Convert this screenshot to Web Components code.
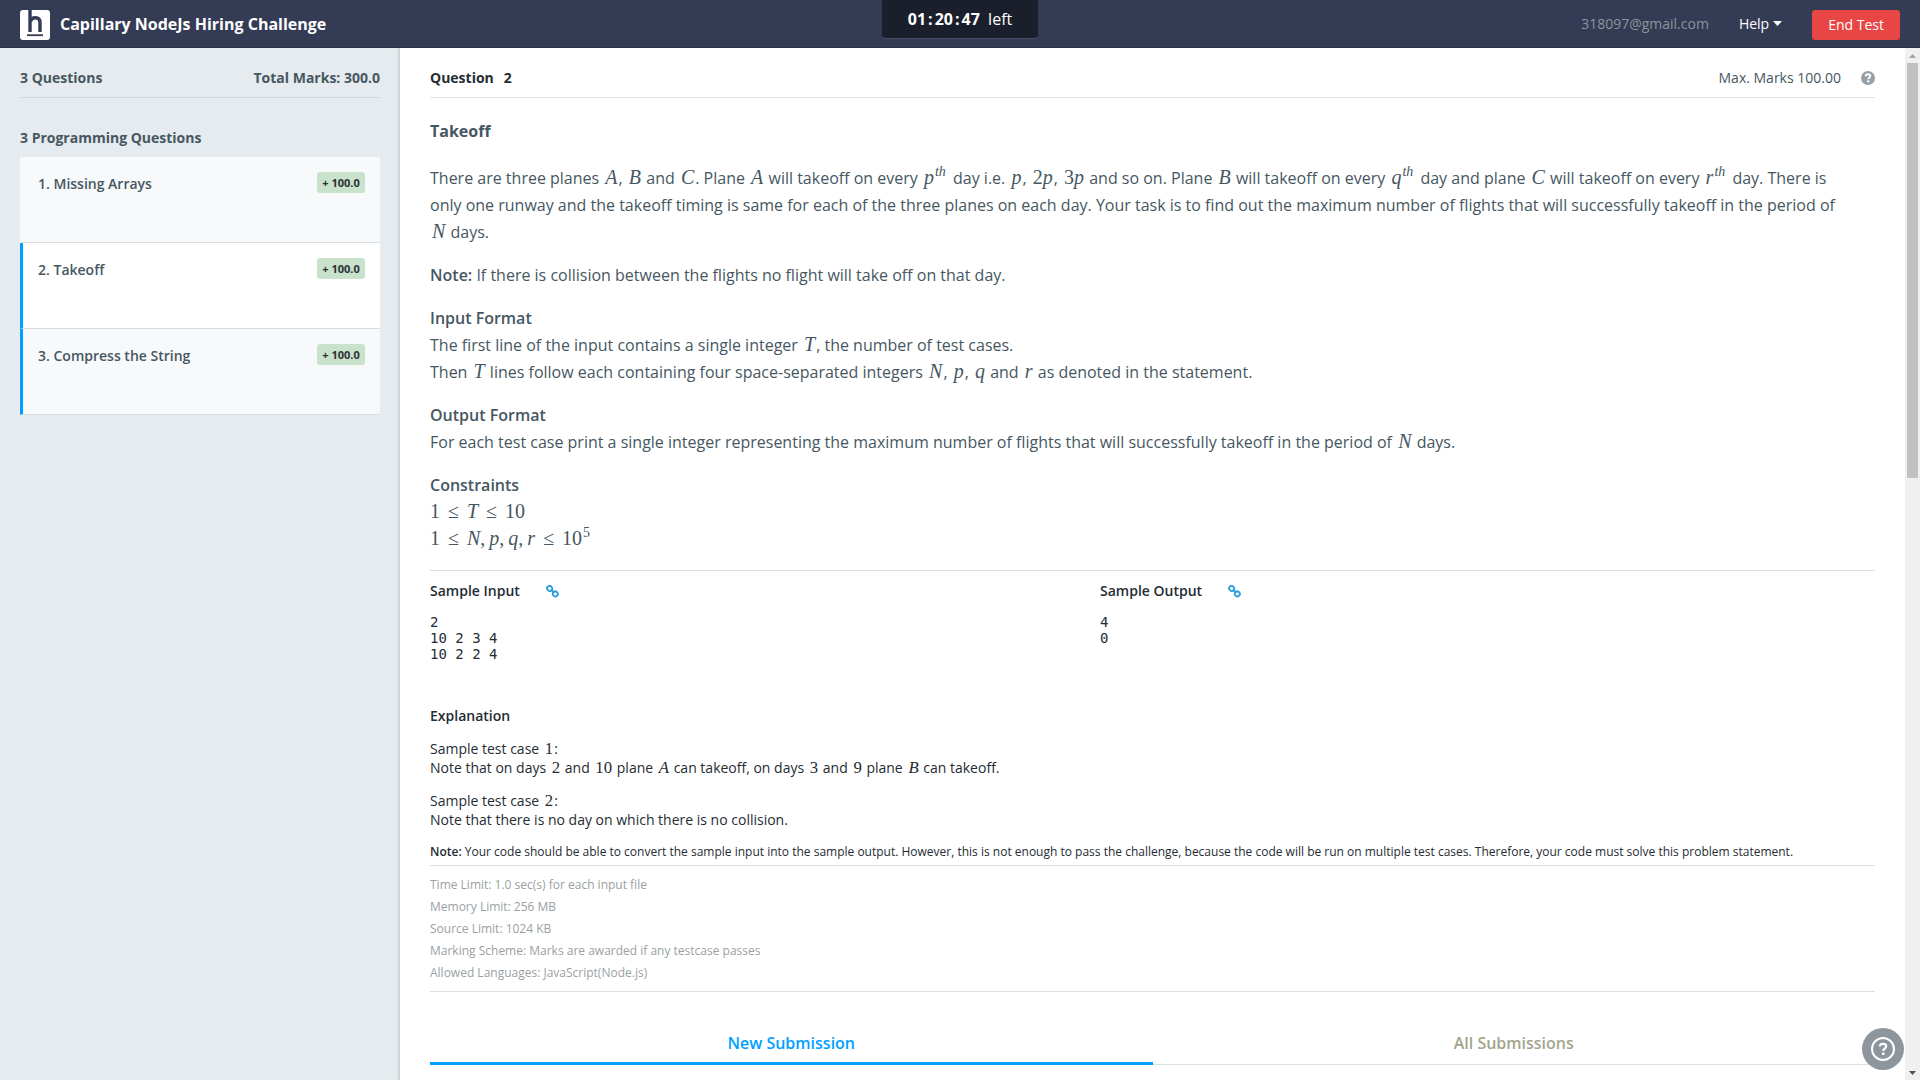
<!DOCTYPE html>
<html lang="en">
<head>
<meta charset="utf-8">
<title>Capillary NodeJs Hiring Challenge</title>
<style>
html,body{height:100%;margin:0}
body{font-family:"Open Sans","Noto Sans",sans-serif;font-size:14px;line-height:20px;color:#465762;background:#fff;overflow:hidden}
</style>
</head>
<body>
<test-app></test-app>
<script>
const define = (name, css, html) => {
  const t = document.createElement('template');
  t.innerHTML = `<style>*{box-sizing:border-box}${css}</style>${html}`;
  customElements.define(name, class extends HTMLElement {
    constructor() {
      super();
      this.attachShadow({mode: 'open'}).append(t.content.cloneNode(true));
    }
  });
};

define('brand-logo', `:host{display:block;width:30px;height:30px}svg{display:block}`,
`<svg width="30" height="30" viewBox="0 0 30 30" aria-hidden="true"><rect width="30" height="30" rx="3" fill="#fff"/><path d="M10 0V22M10.500 11.500C11 8.800 13 7.700 15.600 7.700C18.800 7.700 20 9.500 20 12.500V22" fill="none" stroke="#343b54" stroke-width="3.400"/><path d="M7 25.200H23" stroke="#343b54" stroke-width="1.800"/></svg>`);

define('count-down', `:host{display:block;background:#1b1f2b;color:#fff;border-radius:0 0 4px 4px;border-bottom:1px solid #474d62;width:156px;height:39px;line-height:38px;text-align:center;font-size:16px}
b{font-weight:700}.s{padding:0 2px}`,
`<b>01<span class="s">:</span>20<span class="s">:</span>47</b>&nbsp; left`);

define('top-bar', `:host{display:grid;grid-template-columns:1fr auto 1fr;height:48px;padding:0 20px;background:#343b54;border-bottom:1px solid #2b3049;color:#fff}
.l,.r{display:flex;align-items:center}.l{gap:10px}
.l brand-logo{margin-top:3px}
h1{margin:0;font-size:16px;line-height:24px;font-weight:700}
.r{justify-content:flex-end;gap:30px}
.mail{color:#8c949c}
button{font:inherit;border:0;background:none;color:#fff;padding:0;cursor:pointer}
.help{display:flex;align-items:center;gap:4px}
.end{background:#e84545;border-radius:3px;height:30px;padding:0 16px;margin-top:2px}`,
`<div class="l"><brand-logo></brand-logo><h1>Capillary NodeJs Hiring Challenge</h1></div>
<count-down></count-down>
<div class="r"><span class="mail">318097@gmail.com</span><button class="help">Help <svg width="9" height="5" viewBox="0 0 9 5" aria-hidden="true"><path d="M0 0H9L4.500 5Z" fill="#fff"/></svg></button><button class="end">End Test</button></div>`);

define('question-item', `:host{display:block;height:86px;border-bottom:1px solid #d9dee1;background:#f8f9fb;border-left:3px solid transparent;background-clip:padding-box}
:host([first]){border-left-color:#f8f9fb}
:host([active]){background:#fff}:host([mark]){border-left-color:#00a0ff}
a{display:flex;justify-content:space-between;align-items:flex-start;height:100%;padding:15px 15px 0;color:#465762;text-decoration:none;font-weight:600}
.t{line-height:24px}
.m{background:#c8e2cb;color:#2b3137;border-radius:3px;padding:0 5px;min-width:48px;text-align:center;font-size:11px;line-height:21px;font-weight:700}`,
`<a href="#"><span class="t"><slot></slot></span><span class="m">+ 100.0</span></a>`);

define('side-bar', `:host{display:block;width:400px;flex:none;background:#e5ebee;padding:0 19px 0 20px;border-right:1px solid #cdd4d8;box-shadow:inset -2px 0 2px -1px #cdd4d8}
.sum{display:flex;justify-content:space-between;font-weight:700;line-height:24px;padding:18px 0 7px;border-bottom:1px solid #d3d8db}
h2{font-size:14px;line-height:24px;font-weight:700;margin:28px 0 7px}`,
`<div class="sum"><span>3 Questions</span><span>Total Marks: 300.0</span></div>
<h2>3 Programming Questions</h2>
<nav><question-item first>1. Missing Arrays</question-item><question-item active mark>2. Takeoff</question-item><question-item mark>3. Compress the String</question-item></nav>`);

define('math-text', `:host{display:inline;font-family:"Liberation Serif",serif;font-style:italic;font-size:1.2em;line-height:0;margin:0 1px 0 2px}
::slotted(sup){font-size:70%;line-height:0}::slotted(span){font-style:normal}`,
`<slot></slot>`);

define('problem-statement', `:host{display:block;font-size:16px;line-height:27px;padding:20px 0 17px;border-bottom:1px solid #dedede}
p{margin:0 0 16px}h2{font-size:16px;line-height:27px;margin:0 0 20px;font-weight:700}b{font-weight:600}p:last-child{margin:0}
math-text{font-size:20px}p:last-child math-text{margin:0}
sup{font-size:14px;line-height:0;margin:0 2px 0 1px}span{font-style:normal}.rel{margin:0 8px}.sep{margin-right:4px}`,
`<h2>Takeoff</h2>
<p>There are three planes <math-text>A</math-text>, <math-text>B</math-text> and <math-text>C</math-text>. Plane <math-text>A</math-text> will takeoff on every <math-text>p<sup>th</sup></math-text> day i.e. <math-text>p</math-text>, <math-text><span>2</span>p</math-text>, <math-text><span>3</span>p</math-text> and so on. Plane <math-text>B</math-text> will takeoff on every <math-text>q<sup>th</sup></math-text> day and plane <math-text>C</math-text> will takeoff on every <math-text>r<sup>th</sup></math-text> day. There is<br>only one runway and the takeoff timing is same for each of the three planes on each day. Your task is to find out the maximum number of flights that will successfully takeoff in the period of<br><math-text>N</math-text> days.</p>
<p><b>Note:</b> If there is collision between the flights no flight will take off on that day.</p>
<p><b>Input Format</b><br>The first line of the input contains a single integer <math-text>T</math-text>, the number of test cases.<br>Then <math-text>T</math-text> lines follow each containing four space-separated integers <math-text>N</math-text>, <math-text>p</math-text>, <math-text>q</math-text> and <math-text>r</math-text> as denoted in the statement.</p>
<p><b>Output Format</b><br>For each test case print a single integer representing the maximum number of flights that will successfully takeoff in the period of <math-text>N</math-text> days.</p>
<p><b>Constraints</b><br><math-text><span>1</span><span class="rel">≤</span>T<span class="rel">≤</span><span>10</span></math-text><br><math-text><span>1</span><span class="rel">≤</span>N<span class="sep">,</span>p<span class="sep">,</span>q<span class="sep">,</span>r<span class="rel">≤</span><span>10<sup>5</sup></span></math-text></p>`);

define('link-icon', `:host{display:block}a{display:block}svg{display:block}`,
`<a href="#" aria-label="Copy link"><svg width="13" height="13" viewBox="0 0 13 13" fill="none" stroke="#2b9edb" stroke-width="1.800"><rect x="-2.600" y="-2.400" width="5.200" height="4.800" rx="2.300" transform="translate(3.700 3.500) rotate(45)"/><rect x="-2.600" y="-2.400" width="5.200" height="4.800" rx="2.300" transform="translate(9.300 8.900) rotate(45)"/><path d="M4.800 4.600L8.200 7.800"/></svg></a>`);

define('sample-block', `:host{display:block;color:#252c33}
.h{display:flex;align-items:center;gap:26px}h3{margin:0;font-size:14px;line-height:24px;font-weight:600}
pre{margin:11px 0 0;font:14px/16px "DejaVu Sans Mono","Liberation Mono",monospace}`,
`<div class="h"><h3><slot name="title"></slot></h3><link-icon></link-icon></div><pre><slot></slot></pre>`);

define('sample-explanation', `:host{display:block;color:#252c33}
.cols{display:grid;grid-template-columns:670px 1fr;padding:8px 0 42px}
h3{margin:0 0 11px;font-size:14px;line-height:24px;font-weight:600}
p{margin:0 0 14px;line-height:19px}.n{font-size:12px;line-height:18px;margin:0;padding-bottom:4px;border-bottom:1px solid #dedede}b{font-weight:600}span{font-style:normal}`,
`<div class="cols"><sample-block><span slot="title">Sample Input</span>2
10 2 3 4
10 2 2 4</sample-block><sample-block><span slot="title">Sample Output</span>4
0</sample-block></div>
<h3>Explanation</h3>
<p>Sample test case <math-text><span>1</span></math-text>:<br>Note that on days <math-text><span>2</span></math-text> and <math-text><span>10</span></math-text> plane <math-text>A</math-text> can takeoff, on days <math-text><span>3</span></math-text> and <math-text><span>9</span></math-text> plane <math-text>B</math-text> can takeoff.</p>
<p>Sample test case <math-text><span>2</span></math-text>:<br>Note that there is no day on which there is no collision.</p>
<p class="n"><b>Note:</b> Your code should be able to convert the sample input into the sample output. However, this is not enough to pass the challenge, because the code will be run on multiple test cases. Therefore, your code must solve this problem statement.</p>`);

define('limit-list', `:host{display:block;font-size:12px;line-height:22px;color:#9a9fa3;padding:8px 0 7px;border-bottom:1px solid #dedede}`,
`<div>Time Limit: 1.0 sec(s) for each input file</div><div>Memory Limit: 256 MB</div><div>Source Limit: 1024 KB</div><div>Marking Scheme: Marks are awarded if any testcase passes</div><div>Allowed Languages: JavaScript(Node.js)</div>`);

define('submission-tabs', `:host{display:flex;margin-top:30px;box-shadow:inset 0 -1px #dce1e1}
button{flex:1;font:inherit;font-size:16px;font-weight:600;line-height:24px;height:43px;padding:2px 0 0;border:0;border-bottom:3px solid transparent;background:none;color:#9fa68d}
.on{color:#00a0ff;border-bottom-color:#00a0ff}`,
`<button class="on">New Submission</button><button>All Submissions</button>`);

define('question-head', `:host{display:flex;justify-content:space-between;line-height:24px;padding:18px 0 7px;border-bottom:1px solid #e2e2e2}
b{display:flex;gap:10px;color:#252c33}.r{display:flex;align-items:center;gap:20px}button{border:0;background:none;padding:0;display:block}svg{display:block}`,
`<b><span>Question</span><span>2</span></b><div class="r"><span>Max. Marks 100.00</span><button aria-label="Help"><svg width="14" height="14" viewBox="0 0 14 14"><circle cx="7" cy="7" r="7" fill="#96a0a6"/><path d="M4.700 5.300C4.900 3.800 5.900 3.300 7 3.300C8.400 3.300 9.300 4 9.300 5.100C9.300 6.700 7.200 6.700 7.200 8.300" fill="none" stroke="#fff" stroke-width="1.900"/><rect x="6.200" y="9.300" width="2" height="2" fill="#fff"/></svg></button></div>`);

define('scroll-track', `:host{display:flex;flex-direction:column;align-items:center;justify-content:space-between;flex:none;width:15px;background:#f0f0f0;padding:6px 0 5px}
i{width:11px;height:415px;background:#c1c1c1;margin:5px 0 auto}svg{display:block}`,
`<svg width="7" height="4"><path d="M0 4L3.500 0L7 4Z" fill="#a3a3a3"/></svg><i></i><svg width="7" height="4"><path d="M0 0H7L3.500 4Z" fill="#505050"/></svg>`);

define('help-fab', `:host{position:fixed;right:16px;bottom:10px}button{display:block;border:0;padding:0;background:none}svg{display:block}`,
`<button aria-label="Help"><svg width="42" height="42" viewBox="0 0 42 42"><circle cx="21" cy="21" r="21" fill="#8d959d"/><circle cx="21" cy="21" r="11" fill="none" stroke="#fff" stroke-width="2"/><path d="M17.800 18.300C18 16.600 19.300 15.900 21 15.900C22.900 15.900 24.200 16.800 24.200 18.300C24.200 20.500 21.200 20.600 21.200 23" fill="none" stroke="#fff" stroke-width="2.200"/><rect x="20" y="24.500" width="2.500" height="2.500" rx=".5" fill="#fff"/></svg></button>`);

define('test-app', `:host{display:flex;flex-direction:column;height:100vh}
.row{display:flex;flex:1;min-height:0}main{flex:1;min-width:0;padding:0 30px;overflow:hidden}`,
`<top-bar></top-bar><div class="row"><side-bar></side-bar><main><question-head></question-head><problem-statement></problem-statement><sample-explanation></sample-explanation><limit-list></limit-list><submission-tabs></submission-tabs></main><scroll-track></scroll-track></div><help-fab></help-fab>`);
</script>
</body>
</html>
